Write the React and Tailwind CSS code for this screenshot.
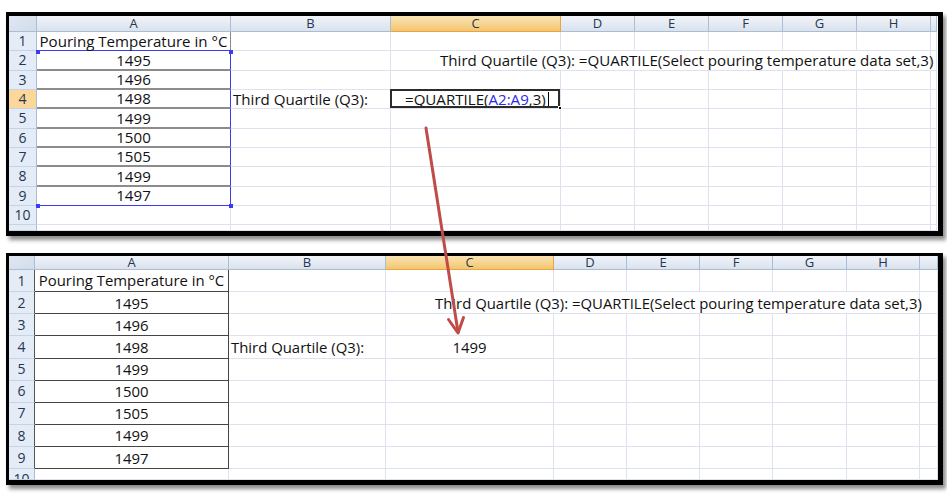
const TOP = {
  panel: "h-[224px] border-l-[3px] border-t-[4px] border-r-[5px] border-b-[5px]",
  cols: ["w-[28px]", "w-[194px]", "w-[160px]", "w-[170px]", "w-[74px]", "w-[74px]", "w-[74px]", "w-[74px]", "w-[74px]", "w-[6px]"],
  merge: "w-[540px]",
  headH: "h-[16px]",
  rowH: "h-[19.33px]",
  lastH: "h-[6px]",
  rows: 10,
  text: "text-[15.1px]",
};

const BOTTOM = {
  panel: "h-[232px] border-l-[3px] border-t-[3px] border-r-[5px] border-b-[5px]",
  cols: ["w-[26px]", "w-[194px]", "w-[157px]", "w-[168px]", "w-[73px]", "w-[73px]", "w-[73px]", "w-[74px]", "w-[73px]", "w-[18px]"],
  merge: "w-[534px]",
  headH: "h-[14px]",
  rowH: "h-[22.15px]",
  lastH: "h-[11px]",
  rows: 9,
  text: "text-[14.9px]",
};

const temps = [1495, 1496, 1498, 1499, 1500, 1505, 1499, 1497];
const letters = ["", "A", "B", "C", "D", "E", "F", "G", "H", ""];
const grid = "border-r border-b border-[#dde2ee]";

function HeaderRow({ cfg }) {
  return (
    <div className={`flex ${cfg.headH}`}>
      {cfg.cols.map((w, i) => (
        <div
          key={i}
          className={`${w} shrink-0 flex items-center justify-center text-[13px] leading-none text-[#27364f] border-r border-b ${
            i === 3
              ? "bg-gradient-to-b from-[#fae3b4] to-[#f3c66d] border-[#e9a545]"
              : i === 0
              ? "bg-gradient-to-br from-[#dfe7f2] to-[#d2dcea] border-[#a9bdd5]"
              : "bg-gradient-to-b from-[#f1f4f9] to-[#dae2ed] border-[#a9bdd5]"
          }`}
        >
          {letters[i]}
        </div>
      ))}
    </div>
  );
}

function RowHead({ cfg, r, hot, dark, partial }) {
  return (
    <div
      className={`${cfg.cols[0]} shrink-0 flex justify-center overflow-hidden text-[14px] leading-none text-[#27364f] border-b border-b-[#c5d3e3] border-r ${
        partial ? "items-start pt-[3px]" : "items-center"
      } ${dark ? "border-r-[#555]" : "border-r-[#a9bdd5]"} ${hot ? "bg-[#fbd79a]" : "bg-[#e4ecf7]"}`}
    >
      {r}
    </div>
  );
}

function Sheet({ cfg, top }) {
  const rows = [];
  for (let r = 1; r <= cfg.rows + 1; r++) {
    const partial = r === cfg.rows + 1;
    const inRange = r <= 9;

    let aClass = grid;
    if (top && inRange) {
      if (r === 1) aClass = "border-r border-r-[#8a8a8a] border-b border-b-[#3b3bf5]";
      else if (r === 9) aClass = "border-r border-b border-[#3b3bf5]";
      else aClass = "border-r border-r-[#3b3bf5] border-b-2 border-b-[#8c8c8c]";
    }
    if (!top && inRange) aClass = "border-r border-b border-[#444]";

    rows.push(
      <div key={r} className={`flex ${partial ? cfg.lastH : cfg.rowH}`}>
        <RowHead cfg={cfg} r={r} hot={top && r === 4} dark={!top && inRange} partial={partial} />
        <div className={`${cfg.cols[1]} shrink-0 flex items-center justify-center whitespace-nowrap ${aClass}`}>
          {r === 1 ? "Pouring Temperature in °C" : inRange ? temps[r - 2] : ""}
        </div>
        <div className={`${cfg.cols[2]} shrink-0 flex items-center pl-[2px] whitespace-nowrap ${grid}`}>
          {r === 4 ? "Third Quartile (Q3):" : ""}
        </div>
        {r === 2 ? (
          <div className={`${cfg.merge} shrink-0 flex items-center pl-[49px] whitespace-nowrap ${grid}`}>
            Third Quartile (Q3): =QUARTILE(Select pouring temperature data set,3)
          </div>
        ) : (
          <>
            <div className={`${cfg.cols[3]} shrink-0 relative flex items-center whitespace-nowrap ${grid} ${r === 4 && !top ? "justify-center" : ""}`}>
              {r === 4 && top && (
                <>
                  <span className="pl-[14px]">
                    =QUARTILE(<span className="text-[#2a2ae8]">A2:A9</span>,3)
                  </span>
                  <span className="ml-[2px] w-px h-[15px] bg-black" />
                  <div className="absolute -left-px -top-px right-0 bottom-0 border-2 border-[#2b2b2b]" />
                  <div className="absolute -right-[2px] -bottom-[2px] w-[4px] h-[4px] bg-black border border-white" />
                </>
              )}
              {r === 4 && !top && "1499"}
            </div>
            {cfg.cols.slice(4, 9).map((w, i) => (
              <div key={i} className={`${w} shrink-0 ${grid}`} />
            ))}
          </>
        )}
        <div className={`${cfg.cols[9]} shrink-0 ${grid}`} />
      </div>
    );
  }

  return (
    <div className={`relative w-[937px] ${cfg.panel} border-black bg-white overflow-hidden shadow-[3px_4px_4px_rgba(0,0,0,0.45)] ${cfg.text} text-[#111]`}>
      <HeaderRow cfg={cfg} />
      {rows}
      {top && (
        <>
          <div className="absolute left-[27px] top-[34px] w-[4px] h-[4px] bg-[#3b3bf5]" />
          <div className="absolute left-[220px] top-[34px] w-[4px] h-[4px] bg-[#3b3bf5]" />
          <div className="absolute left-[27px] top-[188px] w-[4px] h-[4px] bg-[#3b3bf5]" />
          <div className="absolute left-[220px] top-[188px] w-[4px] h-[4px] bg-[#3b3bf5]" />
        </>
      )}
    </div>
  );
}

export default function App() {
  return (
    <div className="relative w-[947px] h-[504px] bg-white overflow-hidden font-['Open_Sans','Liberation_Sans',sans-serif]">
      <div className="flex flex-col gap-[17px] pl-[6px] pt-[12px]">
        <Sheet cfg={TOP} top />
        <Sheet cfg={BOTTOM} />
      </div>
      <svg className="absolute inset-0 pointer-events-none" width="947" height="504" viewBox="0 0 947 504">
        <g stroke="#bf4c49" strokeWidth="3" strokeLinecap="round" strokeLinejoin="round" fill="none">
          <line x1="426" y1="128" x2="458" y2="332" />
          <polyline points="448.5,319.5 458,333 463.5,317.5" />
        </g>
      </svg>
    </div>
  );
}
